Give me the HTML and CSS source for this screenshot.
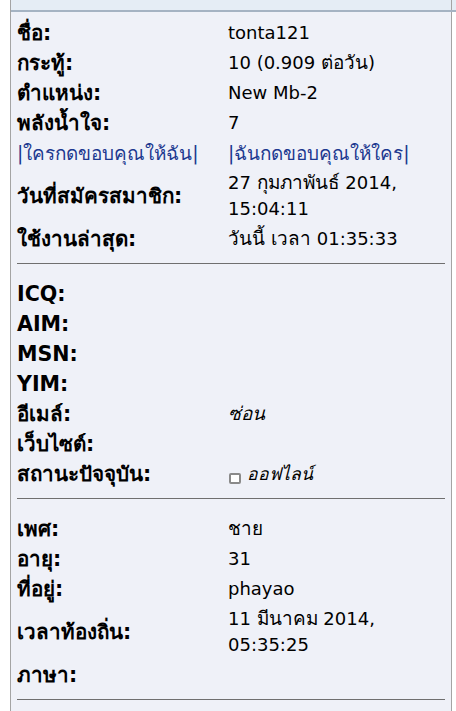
FILE: index.html
```html
<!DOCTYPE html>
<html lang="th">
<head>
<meta charset="utf-8">
<title>Profile</title>
<link rel="stylesheet" href="styles.css">
</head>
<body>
<div class="frame">
  <div class="topbar"><div class="topbar-cell"></div></div>
  <div class="panel">
    <div class="section first">
      <div class="row"><div class="label">ชื่อ:</div><div class="value">tonta121</div></div>
      <div class="row"><div class="label">กระทู้:</div><div class="value">10 (0.909 <span class="th">ต่อวัน</span>)</div></div>
      <div class="row"><div class="label">ตำแหน่ง:</div><div class="value">New Mb-2</div></div>
      <div class="row"><div class="label">พลังน้ำใจ:</div><div class="value">7</div></div>
      <div class="row"><div class="link">|ใครกดขอบคุณให้ฉัน|</div><div class="link">|ฉันกดขอบคุณให้ใคร|</div></div>
      <div class="row"><div class="label">วันที่สมัครสมาชิก:</div><div class="value">27 <span class="th">กุมภาพันธ์</span> 2014,<br>15:04:11</div></div>
      <div class="row"><div class="label">ใช้งานล่าสุด:</div><div class="value"><span class="th">วันนี้ เวลา</span> 01:35:33</div></div>
    </div>
    <hr class="sep">
    <div class="section">
      <div class="row"><div class="label">ICQ:</div><div class="value"></div></div>
      <div class="row"><div class="label">AIM:</div><div class="value"></div></div>
      <div class="row"><div class="label">MSN:</div><div class="value"></div></div>
      <div class="row"><div class="label">YIM:</div><div class="value"></div></div>
      <div class="row"><div class="label">อีเมล์:</div><div class="value"><em class="hidden th">ซ่อน</em></div></div>
      <div class="row"><div class="label">เว็บไซต์:</div><div class="value"></div></div>
      <div class="row"><div class="label">สถานะปัจจุบัน:</div><div class="value status"><span class="status-box"></span><em class="offline">ออฟไลน์</em></div></div>
    </div>
    <hr class="sep">
    <div class="section">
      <div class="row"><div class="label">เพศ:</div><div class="value"><span class="th">ชาย</span></div></div>
      <div class="row"><div class="label">อายุ:</div><div class="value">31</div></div>
      <div class="row"><div class="label">ที่อยู่:</div><div class="value">phayao</div></div>
      <div class="row"><div class="label">เวลาท้องถิ่น:</div><div class="value">11 <span class="th">มีนาคม</span> 2014,<br>05:35:25</div></div>
      <div class="row"><div class="label">ภาษา:</div><div class="value"></div></div>
    </div>
    <hr class="sep">
  </div>
</div>
</body>
</html>
```

FILE: styles.css
```css
html, body {
  margin: 0;
  padding: 0;
  background: #ffffff;
}

body {
  font-family: "DejaVu Sans", Tahoma, sans-serif;
  color: #000000;
}

.frame {
  margin-left: 10px;
  border-left: 1px solid #a4a4a4;
}

.topbar {
  height: 10px;
  background: #e5edf5;
  border-bottom: 2px solid #a5b3c3;
}

.topbar-cell {
  width: 440px;
  height: 10px;
  border-right: 1px solid #a4a4a4;
}

.panel {
  width: 440px;
  background: #eff1f8;
  border-right: 1px solid #a4a4a4;
  padding-bottom: 12px;
}

.section {
  padding: 15px 0 9px 6px;
}

.section.first {
  padding-top: 6px;
}

.row {
  display: grid;
  grid-template-columns: 211px 1fr;
  align-items: center;
  padding: 2px 0;
  line-height: 26px;
  min-height: 26px;
}

.label {
  font-weight: bold;
  font-size: 20.6px;
  white-space: nowrap;
  height: 26px;
}

.value {
  font-size: 18px;
}

.th {
  font-size: 1.05em;
  line-height: 1;
}

.link {
  font-size: 18.9px;
  color: #1d3990;
  white-space: nowrap;
  height: 26px;
}

.hidden,
.offline {
  font-style: italic;
}

.status {
  display: flex;
  align-items: center;
  height: 26px;
}

.offline {
  font-size: 17.5px;
  line-height: 26px;
}

.status-box {
  display: inline-block;
  width: 8px;
  height: 7px;
  border: 2px solid #8a8a8a;
  border-radius: 2px;
  background: #ffffff;
  margin: 9px 6px 0 1px;
}

.sep {
  margin: 0 6px;
  height: 0;
  border: 0;
  border-top: 1px solid #6f6f6f;
}
```
